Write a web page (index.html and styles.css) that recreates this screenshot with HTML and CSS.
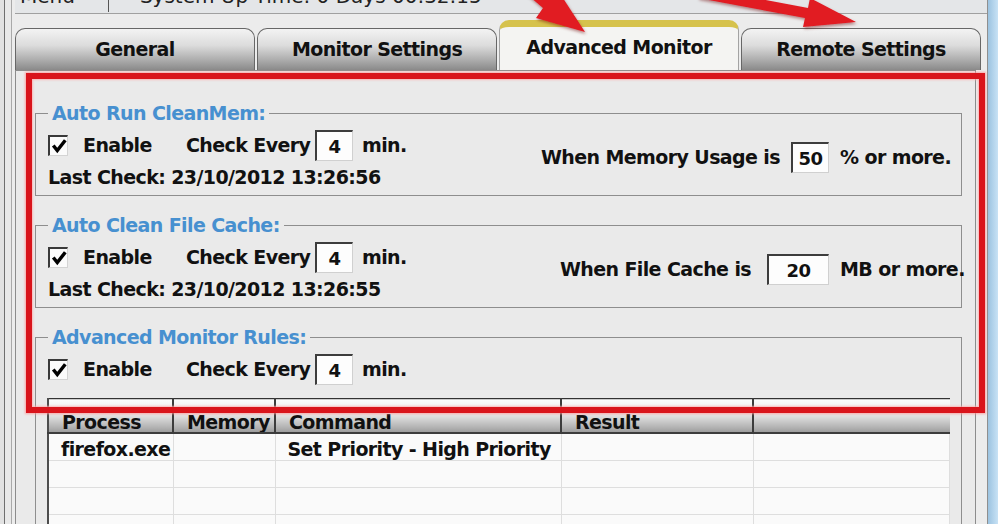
FILE: index.html
```html
<!DOCTYPE html>
<html lang="en">
<head>
  <meta charset="UTF-8">
  <title>CleanMem - Advanced Monitor</title>
  <link rel="stylesheet" href="styles.css">
</head>
<body>
  <div class="window">
    <div class="frame-left"></div>

    <div class="main">
      <div class="topbar">
        <div class="topbar-inner">
          <span class="menu">Menu</span>
          <span class="sep"></span>
          <span class="uptime">System Up Time: 0 Days 00:32:15</span>
        </div>
      </div>

      <div class="tabs">
        <div class="tab">General</div>
        <div class="tab">Monitor Settings</div>
        <div class="tab active">Advanced Monitor</div>
        <div class="tab">Remote Settings</div>
      </div>

      <div class="panel">
        <fieldset class="group">
          <legend>Auto Run CleanMem:</legend>
          <div class="group-body">
            <div class="left">
              <div class="row">
                <span class="checkbox"><svg viewBox="0 0 14 14"><path d="M2 6.5 L5.5 11 L12.5 2" /></svg></span>
                <span class="enable">Enable</span>
                <span class="every">Check Every</span>
                <span class="field small">4</span>
                <span class="unit">min.</span>
              </div>
              <div class="row">Last Check: 23/10/2012 13:26:56</div>
            </div>
            <div class="right">
              <span class="label">When Memory Usage is</span>
              <span class="field small">50</span>
              <span class="suffix">% or more.</span>
            </div>
          </div>
        </fieldset>

        <fieldset class="group">
          <legend>Auto Clean File Cache:</legend>
          <div class="group-body">
            <div class="left">
              <div class="row">
                <span class="checkbox"><svg viewBox="0 0 14 14"><path d="M2 6.5 L5.5 11 L12.5 2" /></svg></span>
                <span class="enable">Enable</span>
                <span class="every">Check Every</span>
                <span class="field small">4</span>
                <span class="unit">min.</span>
              </div>
              <div class="row">Last Check: 23/10/2012 13:26:55</div>
            </div>
            <div class="right">
              <span class="label wide-gap">When File Cache is</span>
              <span class="field wide">20</span>
              <span class="suffix">MB or more.</span>
            </div>
          </div>
        </fieldset>

        <fieldset class="group last">
          <legend>Advanced Monitor Rules:</legend>
          <div class="row">
            <span class="checkbox"><svg viewBox="0 0 14 14"><path d="M2 6.5 L5.5 11 L12.5 2" /></svg></span>
            <span class="enable">Enable</span>
            <span class="every">Check Every</span>
            <span class="field small">4</span>
            <span class="unit">min.</span>
          </div>

          <table class="rules">
            <thead>
              <tr>
                <th class="c-process">Process</th>
                <th class="c-memory">Memory</th>
                <th class="c-command">Command</th>
                <th class="c-result">Result</th>
                <th></th>
              </tr>
            </thead>
            <tbody>
              <tr><td>firefox.exe</td><td></td><td>Set Priority - High Priority</td><td></td><td></td></tr>
              <tr><td></td><td></td><td></td><td></td><td></td></tr>
              <tr><td></td><td></td><td></td><td></td><td></td></tr>
              <tr><td></td><td></td><td></td><td></td><td></td></tr>
            </tbody>
          </table>
        </fieldset>
      </div>
    </div>

    <div class="frame-right"></div>

    <!-- annotations drawn over the screenshot -->
    <div class="annot-box"></div>
    <svg class="arrows" width="998" height="60" viewBox="0 0 998 60">
      <defs>
        <filter id="shade" x="-20%" y="-20%" width="140%" height="160%">
          <feDropShadow dx="1" dy="2" stdDeviation="1.5" flood-color="#6b0000" flood-opacity="0.45" />
        </filter>
      </defs>
      <polygon filter="url(#shade)" fill="#e11a22"
        points="495,-37 502,-27 543,8 536,18 585,32 557,-11 550,-1 509,-37" />
      <polygon filter="url(#shade)" fill="#e11a22"
        points="700,-12 698,-2 805,18 803,27 856,22 810,-2 808,8 702,-12" />
    </svg>
  </div>
</body>
</html>
```

FILE: styles.css
```css
body {
  margin: 0;
  background: #ececec;
  font-family: "DejaVu Sans", "Liberation Sans", sans-serif;
  color: #111;
}
.window {
  position: relative;
  display: flex;
  width: 998px;
  height: 524px;
  overflow: hidden;
  background: #ececec;
}
.frame-left {
  width: 15px;
  flex-shrink: 0;
  background: linear-gradient(to right, #e2e2e2 0 4px, #6f6f6f 4px 5px, #e9e9e9 5px 11px, #a9a9a9 11px 12px, #ececec 12px);
}
.frame-right {
  width: 10px;
  flex-shrink: 0;
  border-left: 1px solid #8f8f8f;
  background: linear-gradient(to right, #9cc3e0, #c8e2f5);
}
.main {
  flex: 1;
  display: flex;
  flex-direction: column;
  min-width: 0;
}

/* top strip, mostly scrolled out of view */
.topbar {
  height: 13px;
  flex-shrink: 0;
  overflow: hidden;
  border-bottom: 1px solid #a0a0a0;
  background: #e4e6e8;
}
.topbar-inner {
  display: flex;
  align-items: flex-start;
  margin-top: -16px;
  padding-left: 5px;
  font-size: 20px;
  line-height: 24px;
  color: #222;
}
.sep {
  width: 1px;
  height: 28px;
  margin: 0 31px 0 33px;
  background: #555;
}

/* tabs */
.tabs {
  display: flex;
  flex-shrink: 0;
  align-items: flex-end;
  gap: 2px;
  height: 50px;
  margin-top: 6px;
}
.tab {
  box-sizing: border-box;
  width: 240px;
  height: 42px;
  flex-shrink: 0;
  border: 1px solid #676767;
  border-bottom: none;
  border-radius: 10px 10px 0 0;
  background: linear-gradient(#f3f3f3, #dcdcdc 40%, #a9a9a9 78%, #8a8a8a);
  font-weight: bold;
  font-size: 19px;
  letter-spacing: -0.6px;
  line-height: 40px;
  text-align: center;
}
.tab.active {
  height: 50px;
  border-color: #a3a3a3;
  border-top: 7px solid #d6c24c;
  background: #f4f4f2;
  line-height: 40px;
}

/* content panel */
.panel {
  box-sizing: border-box;
  width: 961px;
  flex: 1;
  min-height: 0;
  overflow: hidden;
  border: 1px solid #8c8c8c;
  border-bottom: none;
  background: #eaeaea;
  padding: 31px 13px 0 19px;
  font-weight: bold;
  font-size: 19px;
  letter-spacing: -0.6px;
}
.group {
  margin: 0 0 18px;
  border: 1px solid #8e8e8e;
  padding: 5px 5px 2px 12px;
}
.group.last {
  margin-bottom: 0;
  height: 200px;
}
.group legend {
  padding: 0 4px;
  line-height: 22px;
  color: #4790d0;
}
.group-body {
  display: flex;
}
.row {
  display: flex;
  align-items: center;
  height: 32px;
  white-space: nowrap;
}
.checkbox {
  box-sizing: border-box;
  width: 20px;
  height: 21px;
  margin-right: 15px;
  border-style: solid;
  border-width: 2px 1px 1px 2px;
  border-color: #3a3a3a #d4d4d4 #d4d4d4 #3a3a3a;
  background: #fbfbfb;
}
.checkbox svg {
  display: block;
  width: 16px;
  height: 16px;
  margin: 1px 0 0 1px;
  fill: none;
  stroke: #000;
  stroke-width: 3;
}
.enable {
  width: 103px;
}
.every {
  width: 129px;
}
.field {
  box-sizing: border-box;
  height: 31px;
  border-style: solid;
  border-width: 2px 1px 1px 2px;
  border-color: #3d3d3d #d0d0d0 #d0d0d0 #3d3d3d;
  background: #fdfdfd;
  font-size: 18px;
  line-height: 30px;
  text-align: center;
}
.field.small {
  width: 38px;
}
.field.wide {
  width: 62px;
}
.unit {
  margin-left: 9px;
}
.right {
  display: flex;
  align-items: center;
  margin-left: auto;
  padding-bottom: 8px;
  white-space: nowrap;
}
.right .label {
  margin-right: 11px;
}
.right .label.wide-gap {
  margin-right: 16px;
}
.suffix {
  width: 116px;
  margin-left: 11px;
}

/* rules list */
.rules {
  width: 903px;
  margin-top: 13px;
  margin-left: -1px;
  border-collapse: collapse;
  border-left: 2px solid #4d4d4d;
  border-top: 1px solid #333;
  table-layout: fixed;
}
.rules th {
  height: 32px;
  padding: 13px 0 0 13px;
  box-sizing: border-box;
  border-right: 2px solid #3c3c3c;
  border-bottom: 2px solid #3c3c3c;
  background: linear-gradient(#fbfbfb, #e6e6e6 45%, #b2b2b2 85%, #9b9b9b);
  line-height: 20px;
  text-align: left;
  vertical-align: top;
  overflow: hidden;
}
.rules th:last-child {
  border-right: none;
}
.c-process { width: 125px; }
.c-memory { width: 102px; }
.c-command { width: 286px; }
.c-result { width: 192px; }
.rules td {
  height: 27px;
  padding: 4px 0 0 12px;
  box-sizing: border-box;
  border-right: 1px solid #dedede;
  border-bottom: 1px solid #dedede;
  background: #fafafa;
  line-height: 22px;
  vertical-align: top;
  white-space: nowrap;
}

/* annotation overlay */
.annot-box {
  position: absolute;
  left: 26px;
  top: 73px;
  width: 959px;
  height: 340px;
  box-sizing: border-box;
  border: 6px solid #d9141b;
  box-shadow: 0 0 2px 1px rgba(255, 150, 150, 0.8), inset 0 0 2px 1px rgba(255, 170, 170, 0.8);
}
.arrows {
  position: absolute;
  left: 0;
  top: 0;
}
```
